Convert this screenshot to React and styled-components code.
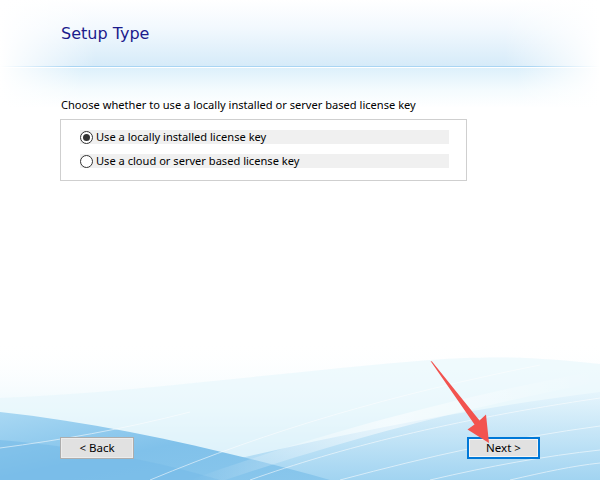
import React from "react";
import styled, { createGlobalStyle } from "styled-components";

const GlobalStyle = createGlobalStyle`
  html, body { margin: 0; padding: 0; background: #ffffff; }
  body { font-family: "Noto Sans", "DejaVu Sans", sans-serif; }
  * { box-sizing: border-box; }
`;

const Page = styled.div`
  position: relative;
  width: 600px;
  height: 480px;
  overflow: hidden;
  background: #ffffff;
`;

const Backdrop = styled.svg`
  position: absolute;
  inset: 0;
  z-index: 0;
  pointer-events: none;
`;

const Content = styled.div`
  position: relative;
  z-index: 1;
  display: flex;
  flex-direction: column;
  height: 100%;
`;

const Header = styled.header`
  height: 66px;
  padding: 23px 0 0 61px;
  background:
    linear-gradient(to right, #ffffff 0%, rgba(255,255,255,0) 16%, rgba(255,255,255,0) 84%, #ffffff 100%),
    linear-gradient(to bottom, #ffffff 0%, #f3f9fe 40%, #d6ebf9 100%);
`;

const Title = styled.h1`
  margin: 0;
  font-family: "DejaVu Sans", Verdana, sans-serif;
  font-weight: normal;
  font-size: 16px;
  line-height: 22px;
  color: #1b1b8c;
`;

const Divider = styled.div`
  height: 2px;
  background:
    linear-gradient(to right, rgba(255,255,255,1) 0%, rgba(255,255,255,0) 12%, rgba(255,255,255,0) 88%, rgba(255,255,255,1) 100%),
    linear-gradient(to bottom, #a9d5f3 0 1px, #ffffff 1px 2px);
`;

const Body = styled.main`
  padding: 29px 0 0 60px;
  background:
    linear-gradient(to right, #ffffff 0%, rgba(255,255,255,0) 14%, rgba(255,255,255,0) 86%, #ffffff 100%),
    linear-gradient(to bottom, #ddf0fb 0px, #f4fbfe 22px, #ffffff 40px);
`;

const Prompt = styled.p`
  margin: 0 0 0 1px;
  font-size: 11.1px;
  line-height: 16px;
  color: #000000;
`;

const GroupBox = styled.div`
  margin-top: 6px;
  width: 407px;
  height: 62px;
  border: 1px solid #cfcfcf;
  background: rgba(255, 255, 255, 0.6);
  padding: 10px 0 0 19px;
  display: flex;
  flex-direction: column;
  gap: 10px;
`;

const Option = styled.label`
  display: flex;
  align-items: center;
  gap: 3px;
  width: 369px;
  height: 14px;
  background: #f0f0f0;
  font-size: 11.1px;
  line-height: 14px;
  color: #000000;
`;

const Radio = styled.span`
  position: relative;
  flex: none;
  width: 13px;
  height: 13px;
  border-radius: 50%;
  border: 1px solid #333333;
  background: #ffffff;
  &::after {
    content: "";
    position: absolute;
    left: 2px;
    top: 2px;
    width: 7px;
    height: 7px;
    border-radius: 50%;
    background: ${(p) => (p.$checked ? "#333333" : "transparent")};
  }
`;

const Spacer = styled.div`
  flex: 1;
`;

const Footer = styled.footer`
  display: flex;
  justify-content: space-between;
  padding: 0 60px 21px 60px;
`;

const Button = styled.button`
  width: ${(p) => (p.$wide ? "74px" : "73px")};
  height: 22px;
  padding: 0;
  font-family: "Noto Sans", "DejaVu Sans", sans-serif;
  font-size: 11.5px;
  line-height: 16px;
  color: #000000;
  background: #e1e1e1;
  border: ${(p) => (p.$default ? "2px solid #0078d7" : "1px solid #adadad")};
  box-shadow: ${(p) => (p.$default ? "inset 0 0 0 1px #f4f4f4" : "inset 0 0 0 1px #ececec")};
  border-radius: 0;
`;

const Pointer = styled.svg`
  position: absolute;
  left: 0;
  top: 0;
  z-index: 2;
  pointer-events: none;
`;

function Waves() {
  return (
    <Backdrop width="600" height="480" viewBox="0 0 600 480">
      <defs>
        <linearGradient id="base" x1="0" y1="0" x2="0" y2="1">
          <stop offset="0" stopColor="#ffffff" stopOpacity="0" />
          <stop offset="0.5" stopColor="#eef9fd" stopOpacity="1" />
          <stop offset="1" stopColor="#bfe2f6" />
        </linearGradient>
        <linearGradient id="rise" x1="0" y1="0" x2="0" y2="1">
          <stop offset="0" stopColor="#e4f4fc" />
          <stop offset="1" stopColor="#94cdef" />
        </linearGradient>
        <linearGradient id="deep" x1="0" y1="0" x2="1" y2="1">
          <stop offset="0" stopColor="#a9d8f3" />
          <stop offset="0.5" stopColor="#80c1ea" />
          <stop offset="1" stopColor="#8ac7ec" />
        </linearGradient>
        <linearGradient id="mist" x1="0" y1="0" x2="1" y2="0">
          <stop offset="0" stopColor="#ffffff" stopOpacity="0" />
          <stop offset="0.5" stopColor="#ffffff" stopOpacity="0.55" />
          <stop offset="1" stopColor="#ffffff" stopOpacity="0" />
        </linearGradient>
      </defs>
      <rect x="0" y="340" width="600" height="140" fill="url(#base)" />
      <path d="M0,398 C140,392 280,372 430,360 C510,354 560,360 600,364 L600,480 L0,480 Z" fill="#e6f6fc" opacity="0.6" />
      <path d="M150,480 C290,445 440,412 600,392 L600,480 Z" fill="url(#rise)" opacity="0.8" />
      <path d="M0,412 C110,424 230,452 330,480 L0,480 Z" fill="url(#deep)" />
      <path d="M0,440 C90,448 160,462 220,480 L0,480 Z" fill="#74b9e7" opacity="0.55" />
      <path d="M190,480 C300,440 440,400 600,370 L600,382 C450,410 320,448 225,480 Z" fill="url(#mist)" />
      <g stroke="#ffffff" strokeWidth="1" fill="none" opacity="0.55">
        <path d="M150,480 C270,430 390,395 540,365" />
        <path d="M250,480 C340,448 450,420 600,398" />
        <path d="M340,480 C430,456 510,438 600,426" />
        <path d="M430,480 C490,466 545,456 600,450" />
        <path d="M0,448 C60,440 120,430 190,412" />
        <path d="M510,480 C545,472 572,466 600,463" />
      </g>
    </Backdrop>
  );
}

function Arrow() {
  return (
    <Pointer width="600" height="480" viewBox="0 0 600 480">
      <polygon
        points="430.5,361 432,361.5 479.5,420.5 486,414.5 489,443 467.5,429.5 474.5,424.5"
        fill="#f2534f"
      />
    </Pointer>
  );
}

export default function App() {
  return (
    <>
      <GlobalStyle />
      <Page>
        <Waves />
        <Content>
          <Header>
            <Title>Setup Type</Title>
          </Header>
          <Divider />
          <Body>
            <Prompt>Choose whether to use a locally installed or server based license key</Prompt>
            <GroupBox role="radiogroup">
              <Option>
                <Radio $checked />
                Use a locally installed license key
              </Option>
              <Option>
                <Radio />
                Use a cloud or server based license key
              </Option>
            </GroupBox>
          </Body>
          <Spacer />
          <Footer>
            <Button $wide>&lt; Back</Button>
            <Button $default>Next &gt;</Button>
          </Footer>
        </Content>
        <Arrow />
      </Page>
    </>
  );
}
